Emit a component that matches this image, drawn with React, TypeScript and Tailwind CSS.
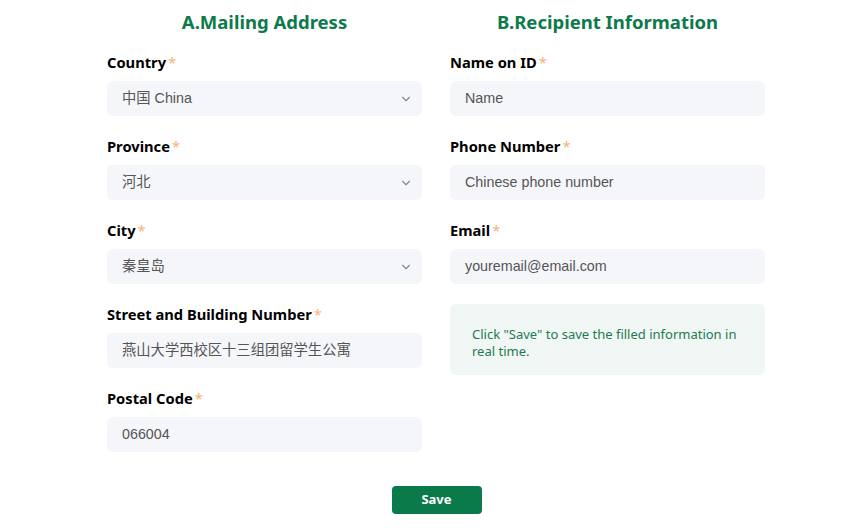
import { ChevronDown } from 'lucide-react';

const cn = '"Liberation Sans", "Noto Sans CJK SC", sans-serif';

function Label({ text }: { text: string }) {
  return (
    <div className="h-5 leading-5 text-[14.7px] font-bold text-black mb-[9px]" style={{ fontFamily: '"Noto Sans", sans-serif' }}>
      {text}
      <span className="text-[#f7b27a] ml-0.5 font-normal">*</span>
    </div>
  );
}

function Field({ label, value, select }: { label: string; value: string; select?: boolean }) {
  return (
    <div className="mb-5">
      <Label text={label} />
      <div className="h-[35px] rounded-md bg-[#f5f6fa] flex items-center justify-between pl-[15px] pr-[9px]">
        <span className="text-[14.3px] text-[#555]" style={{ fontFamily: cn }}>
          {value}
        </span>
        {select && <ChevronDown className="w-3.5 h-3.5 text-[#888]" strokeWidth={2} />}
      </div>
    </div>
  );
}

export default function App() {
  return (
    <div className="w-[865px] h-[532px] bg-white" style={{ fontFamily: '"Noto Sans", sans-serif' }}>
      <div className="w-[658px] ml-[107px] pt-[10px]">
        <div className="grid grid-cols-2 gap-x-7">
          <div>
            <h2 className="h-6 leading-6 text-center text-[18.5px] font-bold text-[#0c7a4b] mb-[18px]">A.Mailing Address</h2>
            <Field label="Country" value="中国 China" select />
            <Field label="Province" value="河北" select />
            <Field label="City" value="秦皇岛" select />
            <Field label="Street and Building Number" value="燕山大学西校区十三组团留学生公寓" />
            <Field label="Postal Code" value="066004" />
          </div>
          <div>
            <h2 className="h-6 leading-6 text-center text-[18.5px] font-bold text-[#0c7a4b] mb-[18px]">B.Recipient Information</h2>
            <Field label="Name on ID" value="Name" />
            <Field label="Phone Number" value="Chinese phone number" />
            <Field label="Email" value="youremail@email.com" />
            <div className="rounded-md bg-[#f1f7f4] pl-[22px] pr-5 pt-[22px] pb-[15px] text-[13px] leading-[17px] text-[#1d7b52]">
              Click "Save" to save the filled information in real time.
            </div>
          </div>
        </div>
        <div className="flex justify-center mt-[14px] pl-[1px]">
          <button className="w-[90px] h-[28px] rounded bg-[#0a7a4b] text-white text-[13px] font-bold">Save</button>
        </div>
      </div>
    </div>
  );
}
